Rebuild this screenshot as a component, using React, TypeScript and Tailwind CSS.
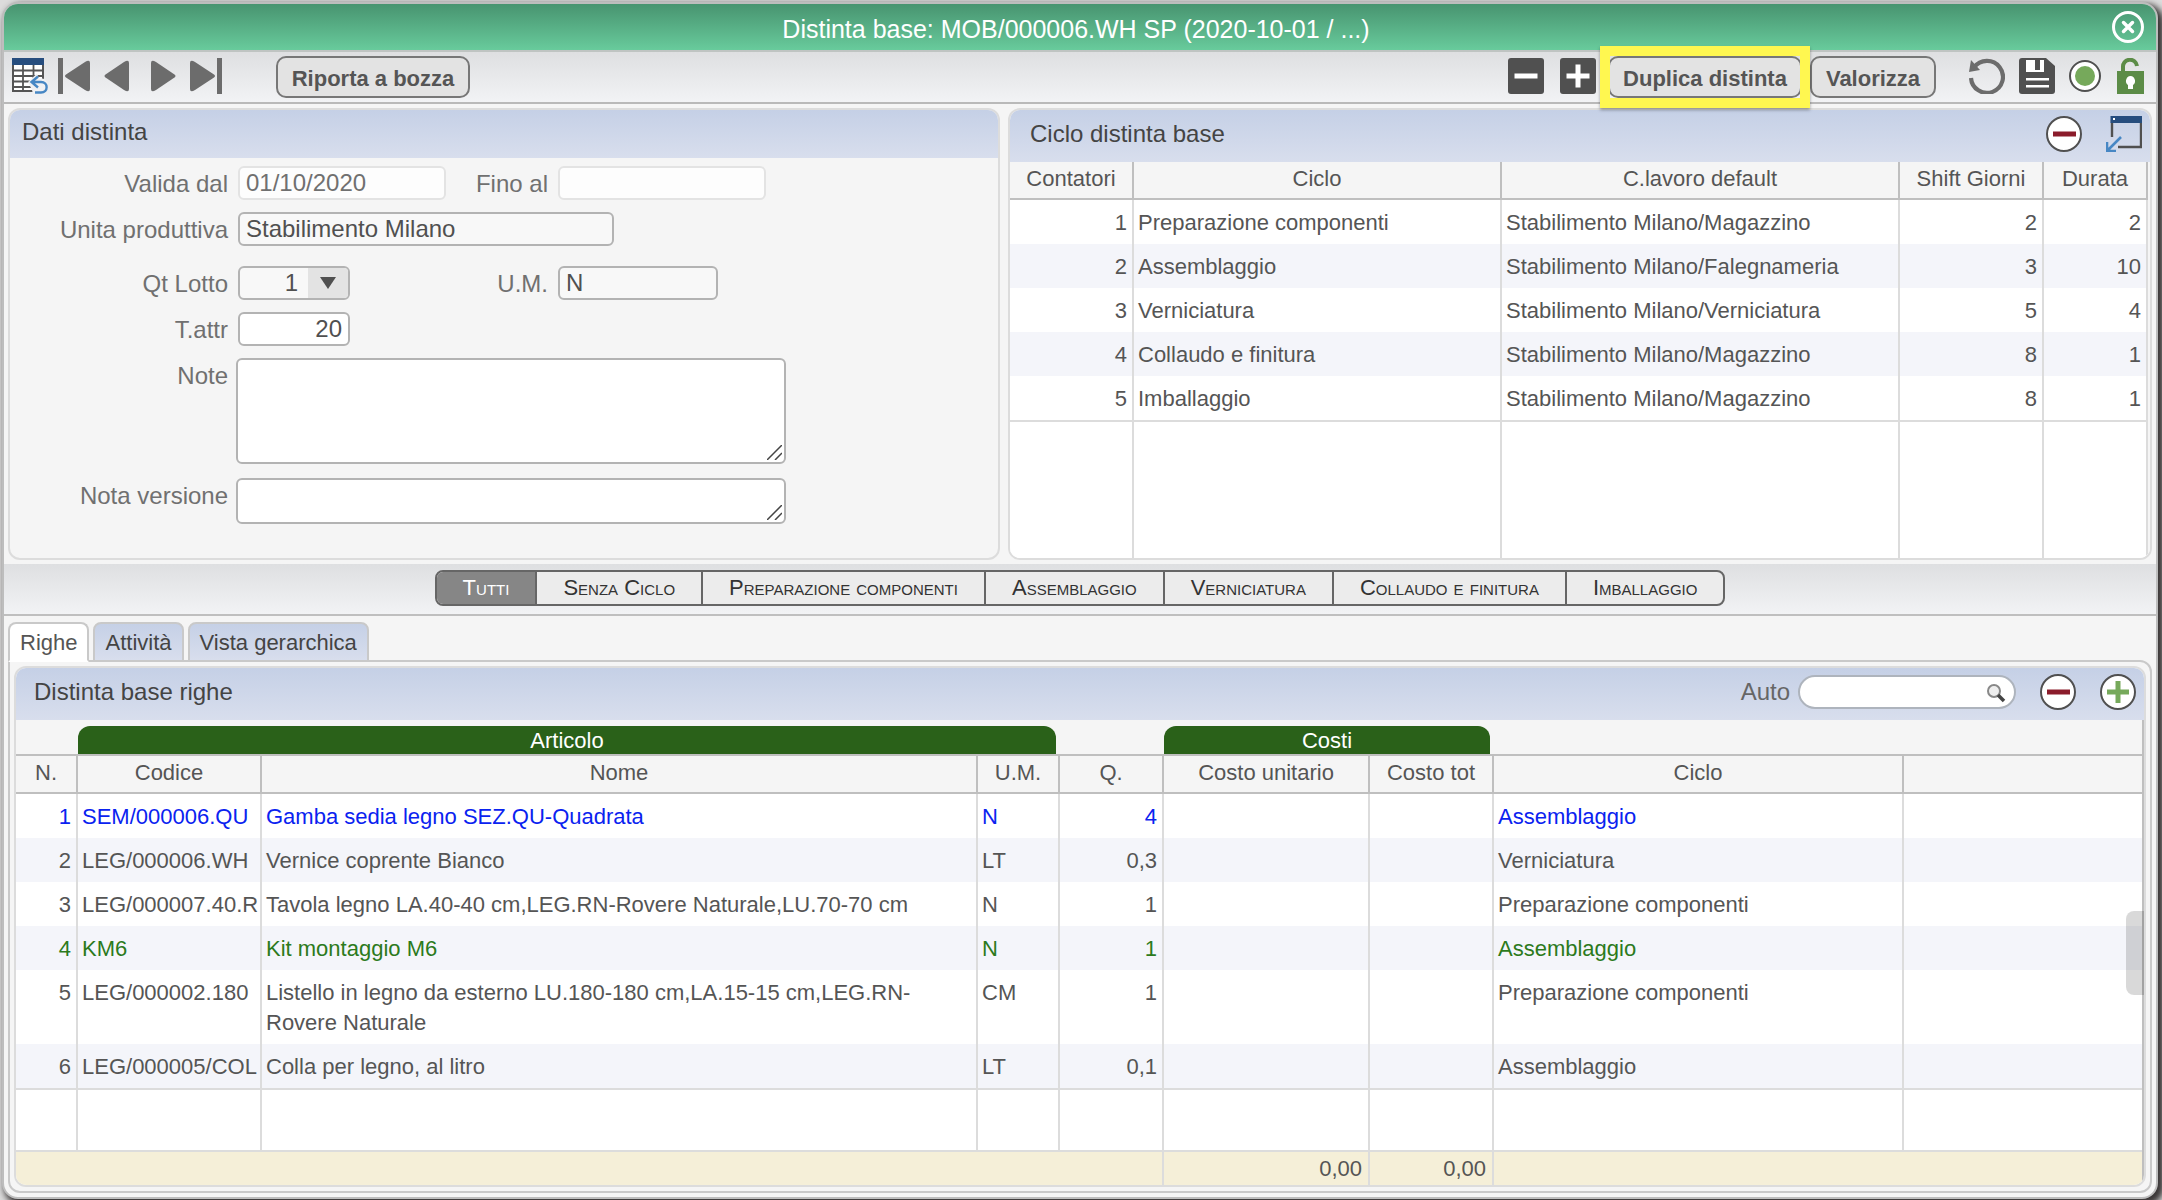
import { useState } from "react";
import type { ReactNode } from "react";

const cycles = [
  { n: 1, ciclo: "Preparazione componenti", centro: "Stabilimento Milano/Magazzino", shift: 2, durata: 2 },
  { n: 2, ciclo: "Assemblaggio", centro: "Stabilimento Milano/Falegnameria", shift: 3, durata: 10 },
  { n: 3, ciclo: "Verniciatura", centro: "Stabilimento Milano/Verniciatura", shift: 5, durata: 4 },
  { n: 4, ciclo: "Collaudo e finitura", centro: "Stabilimento Milano/Magazzino", shift: 8, durata: 1 },
  { n: 5, ciclo: "Imballaggio", centro: "Stabilimento Milano/Magazzino", shift: 8, durata: 1 },
];

const rows = [
  { n: 1, codice: "SEM/000006.QU", nome: "Gamba sedia legno SEZ.QU-Quadrata", um: "N", q: "4", ciclo: "Assemblaggio", color: "text-[#0a22f0]" },
  { n: 2, codice: "LEG/000006.WH", nome: "Vernice coprente Bianco", um: "LT", q: "0,3", ciclo: "Verniciatura", color: "" },
  { n: 3, codice: "LEG/000007.40.R", nome: "Tavola legno LA.40-40 cm,LEG.RN-Rovere Naturale,LU.70-70 cm", um: "N", q: "1", ciclo: "Preparazione componenti", color: "" },
  { n: 4, codice: "KM6", nome: "Kit montaggio M6", um: "N", q: "1", ciclo: "Assemblaggio", color: "text-[#2c7a1c]" },
  { n: 5, codice: "LEG/000002.180", nome: "Listello in legno da esterno LU.180-180 cm,LA.15-15 cm,LEG.RN-Rovere Naturale", um: "CM", q: "1", ciclo: "Preparazione componenti", color: "" },
  { n: 6, codice: "LEG/000005/COL", nome: "Colla per legno, al litro", um: "LT", q: "0,1", ciclo: "Assemblaggio", color: "" },
];

const filters = ["Tutti", "Senza Ciclo", "Preparazione componenti", "Assemblaggio", "Verniciatura", "Collaudo e finitura", "Imballaggio"];
const tabs = ["Righe", "Attività", "Vista gerarchica"];

const field = "h-[34px] rounded-md border-2 border-[#b3b3b3] bg-[#f8f8f8] px-1.5 text-2xl leading-[30px] text-[#505050] outline-none";
const label = "w-[218px] shrink-0 text-right text-2xl leading-9 text-[#707070]";
const header = "flex items-center bg-linear-to-b from-[#c5d0e6] to-[#d8deed] pb-1 text-2xl text-[#444]";
const gridTable = "w-full table-fixed border-collapse text-[22px] leading-[30px] text-[#555]";
const th = "border-r-2 border-b-2 border-[#bfbfbf] p-0 pb-0.5 text-center font-normal";
const td = "overflow-hidden border-r-2 border-[#dcdcdc] pt-2 pb-1.5 pl-1 align-top";
const toolButton = "h-[42px] rounded-[10px] border-2 border-[#777] bg-[#e3e3e3] pt-0.5 text-[22px] font-bold text-[#555]";

export default function App() {
  const [filter, setFilter] = useState("Tutti");
  const [tab, setTab] = useState("Righe");

  return (
    <div className="min-h-screen overflow-hidden bg-[#dcdcdc] p-0.5 pr-1 font-['Liberation_Sans',Arial,sans-serif]">
      <main className="overflow-hidden rounded-2xl border-2 border-[#bdbdbd] bg-[#f5f5f5] shadow-[4px_4px_6px_2px_rgba(40,36,36,0.9)]">
        <header className="flex h-12 items-center border-b-2 border-[#bfc4c2] bg-linear-to-b from-[#489470] to-[#68cb9c] pr-3">
          <span className="w-9" />
          <h1 className="flex-1 pt-1 text-center text-[25px] leading-8 text-white">Distinta base: MOB/000006.WH SP (2020-10-01 / ...)</h1>
          <IconButton name="Chiudi"><CloseIcon /></IconButton>
        </header>

        {/* Toolbar */}
        <div className="flex h-[52px] items-center border-b-2 border-[#b9b9b9] bg-linear-to-b from-[#dedfe1] to-[#f2f3f5] pr-3 pl-2">
          <div className="flex items-center gap-2.5 pb-0.5">
            <IconButton name="Torna alla lista"><ListBackIcon /></IconButton>
            <IconButton name="Primo"><FirstIcon /></IconButton>
            <IconButton name="Precedente"><PrevIcon /></IconButton>
            <IconButton name="Successivo"><NextIcon /></IconButton>
            <IconButton name="Ultimo"><LastIcon /></IconButton>
          </div>
          <button className={`${toolButton} ml-[54px] w-[194px]`}>Riporta a bozza</button>
          <div className="ml-auto flex items-center">
            <div className="flex gap-4 pb-0.5">
              <IconButton name="Rimuovi"><SquareIcon /></IconButton>
              <IconButton name="Aggiungi"><SquareIcon plus /></IconButton>
            </div>
            <div className="relative ml-3">
              <button className={`${toolButton} w-[194px]`}>Duplica distinta</button>
              <div className="pointer-events-none absolute -inset-x-2 -top-2.5 -bottom-2.5 border-10 border-[#fff750] shadow-[0_2px_3px_rgba(0,0,0,0.35)]" />
            </div>
            <button className={`${toolButton} ml-2 w-[126px]`}>Valorizza</button>
            <div className="ml-8 flex items-center gap-3.5 pb-0.5">
              <IconButton name="Ricarica"><ReloadIcon /></IconButton>
              <IconButton name="Salva"><SaveIcon /></IconButton>
              <IconButton name="Stato"><StatusIcon /></IconButton>
              <IconButton name="Sblocca"><UnlockIcon /></IconButton>
            </div>
          </div>
        </div>

        <div className="grid grid-cols-[992fr_1144fr] gap-2 p-1">
          {/* Dati distinta */}
          <section className="overflow-hidden rounded-xl border-2 border-[#dcdcdc]">
            <h2 className={`${header} h-12 px-3`}>Dati distinta</h2>
            <form className="flex flex-col gap-3 pt-2 pb-[34px]">
              <div className="flex h-[34px] gap-2.5">
                <label htmlFor="dal" className={label}>Valida dal</label>
                <input id="dal" disabled defaultValue="01/10/2020" className="h-[34px] w-[208px] rounded-md border-2 border-[#e3e3e3] bg-[#fdfdfd] px-1.5 text-2xl text-[#707070]" />
                <label htmlFor="al" className="w-[92px] text-right text-2xl leading-9 text-[#707070]">Fino al</label>
                <input id="al" disabled className="h-[34px] w-[208px] rounded-md border-2 border-[#e3e3e3] bg-[#fdfdfd] px-1.5 text-2xl" />
              </div>
              <div className="flex h-[34px] gap-2.5">
                <label htmlFor="unita" className={label}>Unita produttiva</label>
                <input id="unita" readOnly defaultValue="Stabilimento Milano" className={`${field} w-[376px]`} />
              </div>
              <div className="flex h-[42px] gap-2.5 pt-2">
                <label htmlFor="lotto" className={label}>Qt Lotto</label>
                <div className="relative">
                  <select id="lotto" className={`${field} w-28 appearance-none pr-[50px] [text-align-last:right]`}>
                    <option>1</option>
                  </select>
                  <span className="pointer-events-none absolute inset-y-0.5 right-0.5 flex w-10 items-center justify-center rounded-r-sm bg-[#e3e3e3]">
                    <svg width="16" height="14" viewBox="0 0 16 14"><path d="M0 1h16L8 13z" fill="#505050" /></svg>
                  </span>
                </div>
                <label htmlFor="um" className="w-[188px] text-right text-2xl leading-9 text-[#707070]">U.M.</label>
                <input id="um" readOnly defaultValue="N" className={`${field} w-40`} />
              </div>
              <div className="flex h-[34px] gap-2.5">
                <label htmlFor="attr" className={label}>T.attr</label>
                <input id="attr" defaultValue="20" className={`${field} w-28 bg-white text-right`} />
              </div>
              <div className="flex gap-2">
                <label htmlFor="note" className={label}>Note</label>
                <TextBox id="note" height="h-[106px]" />
              </div>
              <div className="flex gap-2 pt-0.5">
                <label htmlFor="versione" className={label}>Nota versione</label>
                <TextBox id="versione" height="h-[46px]" />
              </div>
            </form>
          </section>

          {/* Ciclo distinta base */}
          <section className="overflow-hidden rounded-xl border-2 border-[#dcdcdc] bg-white">
            <div className={`${header} h-[52px] gap-6 pr-2 pl-5`}>
              <h2 className="flex-1">Ciclo distinta base</h2>
              <IconButton name="Rimuovi ciclo"><RoundIcon /></IconButton>
              <IconButton name="Apri in finestra"><PopupIcon /></IconButton>
            </div>
            <div className="bg-[#f5f5f5] pr-0.5">
              <table className={`${gridTable} bg-white`}>
                <colgroup>
                  <col className="w-[123px]" />
                  <col className="w-[368px]" />
                  <col />
                  <col className="w-36" />
                  <col className="w-[104px]" />
                </colgroup>
                <thead className="bg-[#f5f5f5]">
                  <tr className="h-[37px]">
                    <th className={th}>Contatori</th>
                    <th className={th}>Ciclo</th>
                    <th className={th}>C.lavoro default</th>
                    <th className={th}>Shift Giorni</th>
                    <th className={th}>Durata</th>
                  </tr>
                </thead>
                <tbody>
                  {cycles.map((c) => (
                    <tr key={c.n} className="even:bg-[#f4f5fa]">
                      <td className={`${td} pr-[5px] text-right`}>{c.n}</td>
                      <td className={td}>{c.ciclo}</td>
                      <td className={td}>{c.centro}</td>
                      <td className={`${td} pr-[5px] text-right`}>{c.shift}</td>
                      <td className={`${td} pr-[5px] text-right`}>{c.durata}</td>
                    </tr>
                  ))}
                  <tr className="h-[137px] border-t-2 border-[#dcdcdc]">
                    {[0, 1, 2, 3, 4].map((i) => <td key={i} className={td} />)}
                  </tr>
                </tbody>
              </table>
            </div>
          </section>
        </div>

        {/* Cycle filter */}
        <div className="flex h-[52px] justify-center border-b-2 border-[#bfbfbf] bg-linear-to-b from-[#dedfe1] to-[#f2f3f5] pt-1.5">
          <div className="flex h-9 overflow-hidden rounded-lg border-2 border-[#666] bg-[#ececec]">
            {filters.map((f) => (
              <button
                key={f}
                onClick={() => setFilter(f)}
                className={`border-l-2 border-[#666] px-[26px] text-[22px] leading-8 [font-variant-caps:small-caps] first:border-l-0 ${
                  filter === f ? "bg-[#868686] text-white" : "text-[#333]"
                }`}
              >
                {f}
              </button>
            ))}
          </div>
        </div>

        <div className="px-1 pt-1.5 pb-1">
          <div role="tablist" className="relative -mb-0.5 flex gap-1">
            {tabs.map((t) => (
              <button
                key={t}
                role="tab"
                aria-selected={tab === t}
                onClick={() => setTab(t)}
                className={`h-10 rounded-t-lg border-2 border-[#c9c9c9] px-2.5 text-[22px] ${
                  tab === t ? "border-b-white bg-white text-[#555]" : "bg-linear-to-b from-[#c5d0e6] to-[#d8deed] text-[#444]"
                }`}
              >
                {t}
              </button>
            ))}
          </div>
          <div className="rounded-xl rounded-tl-none border-2 border-[#c9c9c9] p-1">
            <section className="relative overflow-hidden rounded-xl border-2 border-[#dcdcdc] bg-white">
              <div className={`${header} h-[52px] pr-2 pl-[18px]`}>
                <h2 className="flex-1">Distinta base righe</h2>
                <label htmlFor="cerca" className="mr-2 text-[#666]">Auto</label>
                <div className="relative">
                  <input id="cerca" className="block h-[34px] w-[218px] rounded-full border-2 border-[#aeb4bd] bg-white pr-11 pl-4 text-xl outline-none" />
                  <span className="pointer-events-none absolute top-2 right-2.5"><SearchIcon /></span>
                </div>
                <span className="w-6" />
                <IconButton name="Rimuovi riga"><RoundIcon /></IconButton>
                <span className="w-6" />
                <IconButton name="Aggiungi riga"><RoundIcon plus /></IconButton>
              </div>
              <div className="border-r-2 border-[#bfbfbf]">
                <table className={gridTable}>
                  <colgroup>
                    <col className="w-[61px]" />
                    <col className="w-[184px]" />
                    <col className="w-[716px]" />
                    <col className="w-[82px]" />
                    <col className="w-[104px]" />
                    <col className="w-[206px]" />
                    <col className="w-[124px]" />
                    <col className="w-[410px]" />
                    <col />
                  </colgroup>
                  <thead className="bg-[#f5f5f5]">
                    <tr className="border-b-2 border-[#bfbfbf]">
                      <td />
                      <th colSpan={3} className="p-0 pt-1.5 pr-[3px] pl-px font-normal">
                        <div className="h-7 rounded-t-xl bg-[#2a6119] leading-[30px] text-white">Articolo</div>
                      </th>
                      <td />
                      <th colSpan={2} className="p-0 pt-1.5 pr-[3px] pl-px font-normal">
                        <div className="h-7 rounded-t-xl bg-[#2a6119] leading-[30px] text-white">Costi</div>
                      </th>
                      <td colSpan={2} />
                    </tr>
                    <tr className="h-[38px]">
                      <th className={th}>N.</th>
                      <th className={th}>Codice</th>
                      <th className={th}>Nome</th>
                      <th className={th}>U.M.</th>
                      <th className={th}>Q.</th>
                      <th className={th}>Costo unitario</th>
                      <th className={th}>Costo tot</th>
                      <th className={th}>Ciclo</th>
                      <td className="border-b-2 border-[#bfbfbf]" />
                    </tr>
                  </thead>
                  <tbody>
                    {rows.map((r) => (
                      <tr key={r.n} className={`even:bg-[#f4f5fa] ${r.color}`}>
                        <td className={`${td} pr-[5px] text-right`}>{r.n}</td>
                        <td className={`${td} whitespace-nowrap`}>{r.codice}</td>
                        <td className={td}>{r.nome}</td>
                        <td className={td}>{r.um}</td>
                        <td className={`${td} pr-[5px] text-right`}>{r.q}</td>
                        <td className={td} />
                        <td className={td} />
                        <td className={td}>{r.ciclo}</td>
                        <td />
                      </tr>
                    ))}
                    <tr className="h-[62px] border-t-2 border-[#dcdcdc]">
                      {[0, 1, 2, 3, 4, 5, 6, 7].map((i) => <td key={i} className={td} />)}
                      <td />
                    </tr>
                  </tbody>
                  <tfoot>
                    <tr className="h-[34px] border-t-2 border-[#dcdcdc] bg-[#f5efd8] text-right">
                      <td colSpan={5} className="border-r-2 border-[#dcdcdc]" />
                      <td className="border-r-2 border-[#dcdcdc] p-0 pr-1.5">0,00</td>
                      <td className="border-r-2 border-[#dcdcdc] p-0 pr-1.5">0,00</td>
                      <td colSpan={2} />
                    </tr>
                  </tfoot>
                </table>
              </div>
              <div className="absolute right-0 bottom-[190px] h-[84px] w-[18px] rounded-l-lg bg-black/15" />
            </section>
          </div>
        </div>
      </main>
    </div>
  );
}

function IconButton({ name, children }: { name: string; children: ReactNode }) {
  return (
    <button type="button" aria-label={name} className="block shrink-0">
      {children}
    </button>
  );
}

function TextBox({ id, height }: { id: string; height: string }) {
  return (
    <div className="relative">
      <textarea id={id} className={`block w-[550px] resize-none rounded-md border-2 border-[#b3b3b3] bg-white px-1.5 text-2xl text-[#505050] outline-none ${height}`} />
      <svg className="pointer-events-none absolute right-1 bottom-1" width="15" height="15" viewBox="0 0 15 15" stroke="#444" strokeWidth="1.5">
        <path d="M0 15 15 0M8 15l7-7" />
      </svg>
    </div>
  );
}

function CloseIcon() {
  return (
    <svg width="32" height="32" viewBox="0 0 32 32" fill="none" stroke="#fff">
      <circle cx="16" cy="16" r="14.5" strokeWidth="3" />
      <path d="m11.5 11.5 9 9m0-9-9 9" strokeWidth="3.5" strokeLinecap="round" />
    </svg>
  );
}

function ListBackIcon() {
  return (
    <svg width="36" height="36" viewBox="0 0 36 36" fill="none">
      <path d="M1 6h30v27H1z" fill="#fff" stroke="#555" strokeWidth="2" />
      <path d="M0 12.5h31M0 18h31M0 23.5h20M0 29h20M11 6v28M21.5 6v18" stroke="#555" strokeWidth="1.8" />
      <path d="M0 0h32v7H0z" fill="#264d7e" />
      <path d="M16 24l9-8.5 2 5h3c8 0 8 15.5 0 15.5h-9l-1-4z" fill="#f0f1f3" />
      <path d="m26 18.5-6.5 5.5 6.5 5.5M20 24h9c7.5 0 7.5 10.5 0 10.5h-6" stroke="#4787c4" strokeWidth="2.4" />
    </svg>
  );
}

function FirstIcon() {
  return (
    <svg width="33" height="36" viewBox="0 0 33 36" fill="#6c6c6c">
      <path d="M0 0h5v36H0zM8 16.5 27 4q5-3 5 1v26q0 4-5 1L8 19.5q-2-1.5 0-3z" />
    </svg>
  );
}

function PrevIcon() {
  return (
    <svg width="36" height="36" viewBox="0 0 36 36" fill="#6c6c6c">
      <path d="M4.5 16.5 23 4q5-3 5 1v26q0 4-5 1L4.5 19.5q-2-1.5 0-3z" />
    </svg>
  );
}

function NextIcon() {
  return (
    <svg width="33" height="36" viewBox="0 0 33 36" fill="#6c6c6c">
      <path d="M27.5 16.5 9 4Q4 1 4 5v26q0 4 5 1l18.5-12.5q2-1.5 0-3z" />
    </svg>
  );
}

function LastIcon() {
  return (
    <svg width="32" height="36" viewBox="0 0 32 36" fill="#6c6c6c">
      <path d="M27 0h5v36h-5zM24 16.5 5 4Q0 1 0 5v26q0 4 5 1l19-12.5q2-1.5 0-3z" />
    </svg>
  );
}

function SquareIcon({ plus }: { plus?: boolean }) {
  return (
    <svg width="36" height="36" viewBox="0 0 36 36">
      <rect width="36" height="36" rx="3" fill="#505050" />
      <path d={plus ? "M6.5 18h23M18 6.5v23" : "M6.5 18h23"} stroke="#fff" strokeWidth="5" />
    </svg>
  );
}

function RoundIcon({ plus }: { plus?: boolean }) {
  return (
    <svg width="36" height="36" viewBox="0 0 36 36">
      <circle cx="18" cy="18" r="17" fill="#fff" stroke="#505050" strokeWidth="2" />
      {plus ? (
        <path d="M7 18h22M18 7v22" stroke="#76a95b" strokeWidth="5" />
      ) : (
        <path d="M7 18h23" stroke="#8b1c2b" strokeWidth="5" />
      )}
    </svg>
  );
}

function ReloadIcon() {
  return (
    <svg width="37" height="36" viewBox="0 0 37 36" fill="none">
      <path d="M6 9.5A16 16 0 1 1 3 20" stroke="#6c6c6c" strokeWidth="4.2" />
      <path d="M3 2 1 14l11-2z" fill="#6c6c6c" />
    </svg>
  );
}

function SaveIcon() {
  return (
    <svg width="36" height="36" viewBox="0 0 36 36">
      <path d="M3 0h24l9 8v25q0 3-3 3H3q-3 0-3-3V3q0-3 3-3z" fill="#505050" />
      <path d="M7 2h18v12H7zM7 20h23v2.5H7zM7 27h23v2.5H7z" fill="#fff" />
      <path d="M16 2h5v10h-5z" fill="#505050" />
    </svg>
  );
}

function StatusIcon() {
  return (
    <svg width="33" height="32" viewBox="0 0 33 32">
      <circle cx="16" cy="16" r="15" fill="#fff" stroke="#505050" strokeWidth="2" />
      <circle cx="16" cy="16" r="10" fill="#76a95b" />
    </svg>
  );
}

function UnlockIcon() {
  return (
    <svg width="28" height="36" viewBox="0 0 28 36" fill="none">
      <path d="M7 14V9.5a7 7 0 0 1 14-1.5" stroke="#5c8c47" strokeWidth="4" />
      <path d="M1 13h27v23H1z" fill="#5c8c47" />
      <path d="M14.5 18a5 5 0 0 1 2.5 9v4h-5v-4a5 5 0 0 1 2.5-9z" fill="#fff" />
    </svg>
  );
}

function PopupIcon() {
  return (
    <svg width="36" height="36" viewBox="0 0 36 36" fill="none">
      <path d="M6 21V5h29v26H12" stroke="#505050" strokeWidth="2.4" />
      <path d="M4.5 0H36v7H4.5z" fill="#264d7e" />
      <path d="M7 2h2v2H7z" fill="#fff" />
      <path d="M15 21 2 34M1 26v9h9" stroke="#4787c4" strokeWidth="2.6" />
    </svg>
  );
}

function SearchIcon() {
  return (
    <svg width="20" height="20" viewBox="0 0 20 20" fill="none">
      <circle cx="8" cy="8" r="6" fill="#eee" stroke="#888" strokeWidth="2" />
      <path d="m12 12 6 6" stroke="#444" strokeWidth="3.5" />
    </svg>
  );
}
